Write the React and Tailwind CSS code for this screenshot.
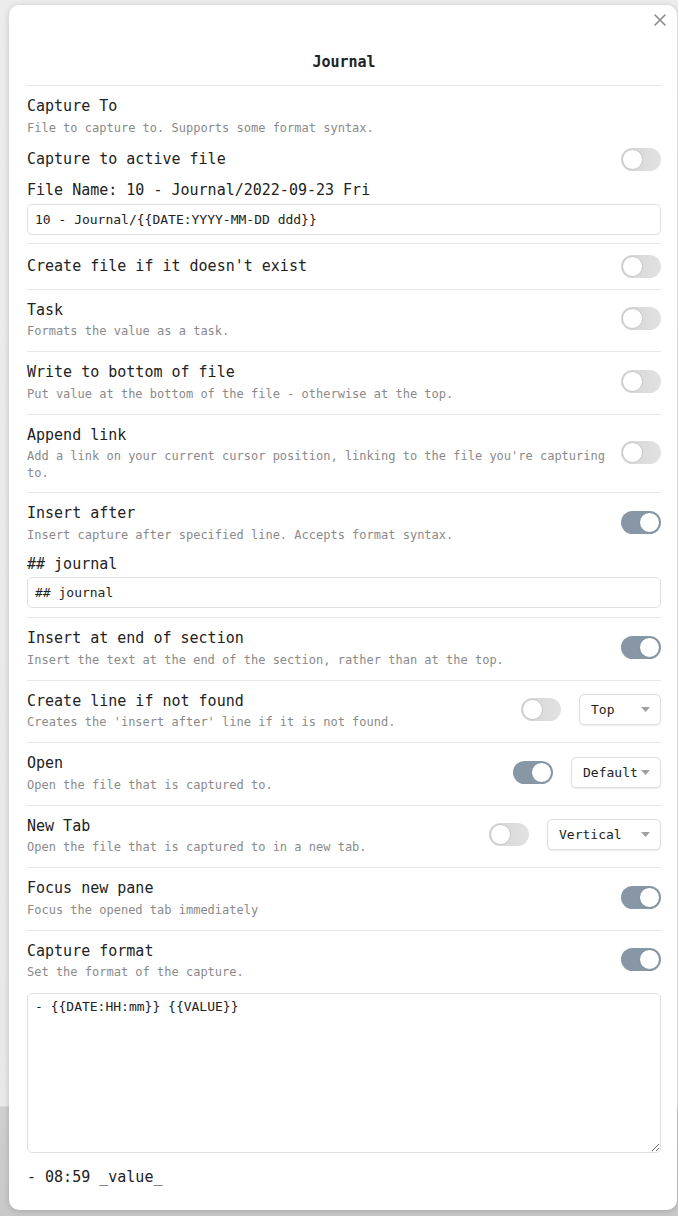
import React from "react";

const MONO = "font-['DejaVu_Sans_Mono','Liberation_Mono',monospace]";

function Toggle({ on }) {
  return (
    <div
      className={`relative w-[40px] h-[23px] shrink-0 rounded-full ${
        on ? "bg-[#8797a5]" : "bg-[linear-gradient(to_right,#d4d4d4,#e2e2e2)]"
      }`}
    >
      <div
        className={`absolute top-[1px] w-[21px] h-[21px] rounded-full bg-white border ${
          on ? "right-[1px] border-[#7c8c9a]" : "left-[1px] border-[#c6c6c6]"
        }`}
      />
    </div>
  );
}

function Select({ value, width }) {
  return (
    <div
      className={`${width} h-[31px] shrink-0 flex items-center justify-between pl-[11px] pr-[10px] rounded-[5px] border border-[#dedede] bg-white shadow-[0_1px_2px_rgba(0,0,0,0.08)] text-[13px] text-[#222]`}
    >
      <span>{value}</span>
      <svg width="9" height="5" viewBox="0 0 9 5">
        <path d="M0 0h9L4.5 5z" fill="#a0a0a0" />
      </svg>
    </div>
  );
}

function Title({ children }) {
  return <div className="text-[15px] leading-[25.5px] text-[#222]">{children}</div>;
}

function Desc({ children }) {
  return <div className="text-[12px] leading-[17px] text-[#8a8a8a]">{children}</div>;
}

function Row({ title, desc, on, extra, border = true, pb = "pb-[11px]", children }) {
  return (
    <div className={`pt-[8px] ${pb} ${border ? "border-b border-[#e6e6e6]" : ""}`}>
      <div className="flex items-center">
        <div className="flex-1 mr-[16px]">
          <Title>{title}</Title>
          {desc && <Desc>{desc}</Desc>}
        </div>
        <div className="flex items-center gap-[18px]">
          <Toggle on={on} />
          {extra}
        </div>
      </div>
      {children}
    </div>
  );
}

export default function App() {
  return (
    <div
      className={`min-h-screen pt-[5px] pb-[6px] bg-[linear-gradient(to_bottom,#ececec_0,#e9e9e9_1106px,#cfcfcf_1107px,#c9c9c9_100%)] ${MONO}`}
    >
      <div className="ml-[9px] w-[668px] h-[1205px] rounded-[10px] bg-white shadow-[0_1px_6px_rgba(0,0,0,0.18)] pl-[18px] pr-[16px] relative">
        {/* close */}
        <div className="absolute right-[7px] top-[5px] w-[20px] h-[20px] flex items-center justify-center">
          <svg width="12" height="12" viewBox="0 0 12 12">
            <path d="M1 1l10 10M11 1L1 11" stroke="#8a8a8a" strokeWidth="1.6" strokeLinecap="round" />
          </svg>
        </div>

        <div className="pt-[46px] pb-[12px] text-center text-[15px] leading-[22px] font-bold text-[#222] border-b border-[#e6e6e6]">
          Journal
        </div>

        {/* Capture To */}
        <div className="pt-[8px] pb-[8px] border-b border-[#e6e6e6]">
          <Title>Capture To</Title>
          <Desc>File to capture to. Supports some format syntax.</Desc>
          <div className="mt-[10px] flex items-center justify-between">
            <Title>Capture to active file</Title>
            <Toggle on={false} />
          </div>
          <div className="mt-[6px]">
            <Title>File Name: 10 - Journal/2022-09-23 Fri</Title>
          </div>
          <input
            readOnly
            value="10 - Journal/{{DATE:YYYY-MM-DD ddd}}"
            className="block w-full h-[31px] px-[7px] rounded-[5px] border border-[#e0e0e0] text-[13px] text-[#222] outline-none"
          />
        </div>

        <div className="pt-[10px] pb-[9.5px] border-b border-[#e6e6e6] flex items-center justify-between">
          <Title>Create file if it doesn't exist</Title>
          <Toggle on={false} />
        </div>

        <Row title="Task" desc="Formats the value as a task." on={false} />
        <Row
          title="Write to bottom of file"
          desc="Put value at the bottom of the file - otherwise at the top."
          on={false}
        />
        <Row
          title="Append link"
          desc="Add a link on your current cursor position, linking to the file you're capturing to."
          on={false}
          pb="pb-[10px]"
        />
        <Row
          title="Insert after"
          desc="Insert capture after specified line. Accepts format syntax."
          on={true}
          pb="pb-[9px]"
        >
          <div className="mt-[8px]">
            <Title>## journal</Title>
          </div>
          <input
            readOnly
            value="## journal"
            className="block w-full h-[31px] px-[7px] rounded-[5px] border border-[#e0e0e0] text-[13px] text-[#222] outline-none"
          />
        </Row>
        <Row
          title="Insert at end of section"
          desc="Insert the text at the end of the section, rather than at the top."
          on={true}
        />
        <Row
          title="Create line if not found"
          desc="Creates the 'insert after' line if it is not found."
          on={false}
          extra={<Select value="Top" width="w-[82px]" />}
        />
        <Row
          title="Open"
          desc="Open the file that is captured to."
          on={true}
          extra={<Select value="Default" width="w-[90px]" />}
        />
        <Row
          title="New Tab"
          desc="Open the file that is captured to in a new tab."
          on={false}
          extra={<Select value="Vertical" width="w-[114px]" />}
        />
        <Row title="Focus new pane" desc="Focus the opened tab immediately" on={true} />
        <Row
          title="Capture format"
          desc="Set the format of the capture."
          on={true}
          border={false}
        />

        <textarea
          readOnly
          defaultValue="- {{DATE:HH:mm}} {{VALUE}}"
          className="block w-full h-[160px] mt-[1px] px-[7px] py-[4px] rounded-[5px] border border-[#e0e0e0] text-[13px] leading-[18px] text-[#222] outline-none resize-y"
        />

        <div className="mt-[12px]">
          <Title>- 08:59 _value_</Title>
        </div>
      </div>
    </div>
  );
}
